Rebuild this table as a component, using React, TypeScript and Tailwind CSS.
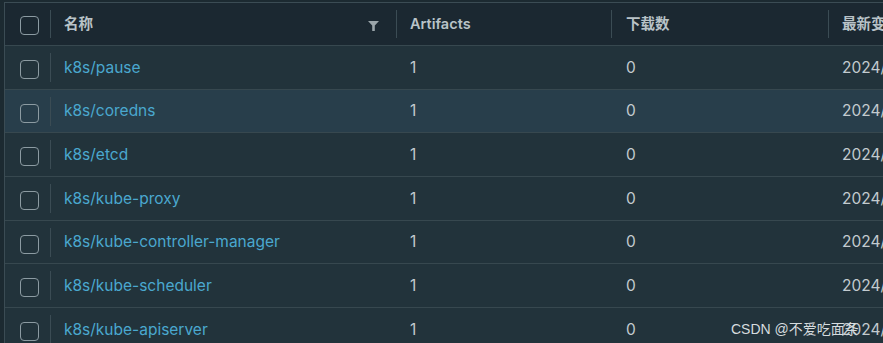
import React from "react";

const rows = [
  "k8s/pause",
  "k8s/coredns",
  "k8s/etcd",
  "k8s/kube-proxy",
  "k8s/kube-controller-manager",
  "k8s/kube-scheduler",
  "k8s/kube-apiserver",
];

function Box() {
  return <div className="w-[19px] h-[19px] rounded-[4px] border border-[#8c9ba2] shrink-0" />;
}

export default function App() {
  const font = { fontFamily: "Inter, 'Noto Sans CJK SC', sans-serif" };
  return (
    <div className="w-[883px] h-[343px] overflow-hidden bg-[#1c2a31] relative" style={font}>
      <div className="ml-[4px] mt-[2px] border-l border-t border-[#3b4c54] bg-[#22333b] w-[879px] overflow-hidden">
        <div className="flex h-[43px] bg-[#1b2831] border-b border-[#37484f] items-center text-[14.5px] font-semibold text-[#b9c3c8] whitespace-nowrap">
          <div className="w-[45px] shrink-0 flex items-center justify-center pl-[3px] pt-[3px]"><Box /></div>
          <div className="w-px shrink-0 h-[28px] bg-[#3b4c54]" />
          <div className="w-[345px] shrink-0 flex items-center pl-[13px] pr-[17px]">
            <span>名称</span>
            <span className="flex-1" />
            <svg width="11" height="10" viewBox="0 0 11 10" className="mt-[3px]"><path d="M0 0 H11 L6.8 4.5 V10 H4.2 V4.5 Z" fill="#9aa5aa" /></svg>
          </div>
          <div className="w-px shrink-0 h-[28px] bg-[#3b4c54]" />
          <div className="w-[214px] shrink-0 pl-[13px]">Artifacts</div>
          <div className="w-px shrink-0 h-[28px] bg-[#3b4c54]" />
          <div className="w-[216px] shrink-0 pl-[14px]">下载数</div>
          <div className="w-px shrink-0 h-[28px] bg-[#3b4c54]" />
          <div className="shrink-0 pl-[13px]">最新变更时间</div>
        </div>
        {rows.map((r, i) => (
          <div
            key={r}
            className={`flex h-[43.7px] items-center border-b border-[#37484f] text-[15.5px] whitespace-nowrap ${i === 1 ? "bg-[#283e4b]" : "bg-[#22333b]"}`}
          >
            <div className="w-[45px] shrink-0 flex items-center justify-center pl-[3px] pt-[4px]"><Box /></div>
            <div className="w-px shrink-0 h-[29px] bg-[#3b4c54]" />
            <div className="w-[345px] shrink-0 pl-[13px] text-[#4aa8cf]">{r}</div>
            <div className="w-px shrink-0" />
            <div className="w-[214px] shrink-0 pl-[13px] text-[#c3cbcf]">1</div>
            <div className="w-px shrink-0" />
            <div className="w-[216px] shrink-0 pl-[14px] text-[#c3cbcf]">0</div>
            <div className="w-px shrink-0" />
            <div className="shrink-0 pl-[13px] text-[#c3cbcf]">2024/03/15</div>
          </div>
        ))}
      </div>
      <div className="absolute left-[731px] top-[319px] text-[14px] text-[#d6dcdf]" style={{ fontFamily: "'Liberation Sans', 'Noto Sans CJK SC', sans-serif" }}>
        CSDN @不爱吃面条
      </div>
    </div>
  );
}
